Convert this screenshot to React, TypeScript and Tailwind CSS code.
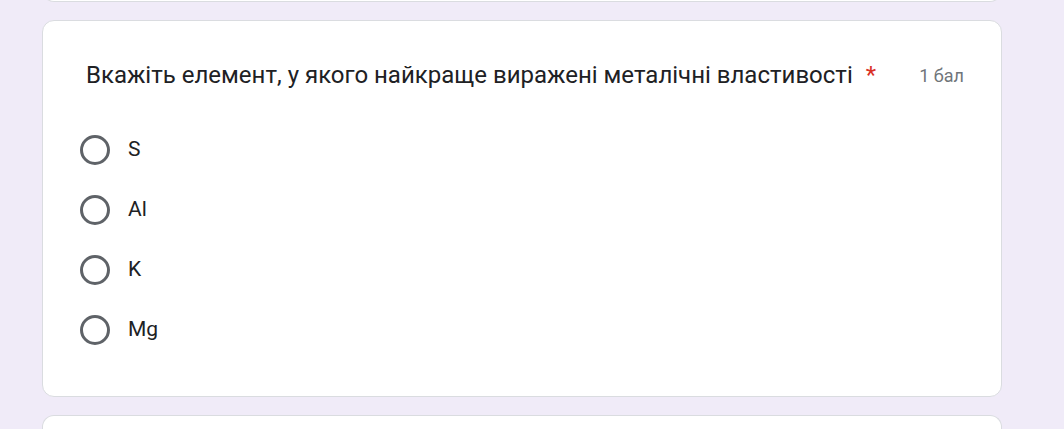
export default function App() {
  const options = ["S", "Al", "K", "Mg"];

  return (
    <div className="h-[429px] overflow-hidden bg-[#f0ebf8] font-['Roboto',_'Liberation_Sans',_sans-serif]">
      <div className="flex w-[960px] flex-col gap-[18px] ml-[42px]">
        {/* previous question (only its bottom edge shows) */}
        <div className="-mt-[10px] h-[12px] rounded-b-[12px] border border-t-0 border-[#dadce0] bg-white" />

        {/* question card */}
        <div className="h-[377px] rounded-[12px] border border-[#dadce0] bg-white pt-[39px] pl-[43px] pr-[37px]">
          <div className="flex items-center justify-between h-[30px]">
            <div className="flex items-center text-[24px] text-[#202124] leading-[30px]">
              <span>Вкажіть елемент, у якого найкраще виражені металічні властивості</span>
              <span className="ml-[13px] text-[#d93025]">*</span>
            </div>
            <span className="text-[18px] text-[#70757a]">1 бал</span>
          </div>

          <div className="mt-[30px] flex flex-col -ml-[6px]">
            {options.map((opt, index) => (
              <label key={index} className="flex h-[60px] items-center gap-[18px]">
                <span className="h-[30px] w-[30px] rounded-full border-[3px] border-[#5f6368]" />
                <span className="text-[21px] text-[#202124]">{opt}</span>
              </label>
            ))}
          </div>
        </div>

        {/* next question */}
        <div className="h-[40px] rounded-t-[12px] border border-b-0 border-[#dadce0] bg-white" />
      </div>
    </div>
  );
}
